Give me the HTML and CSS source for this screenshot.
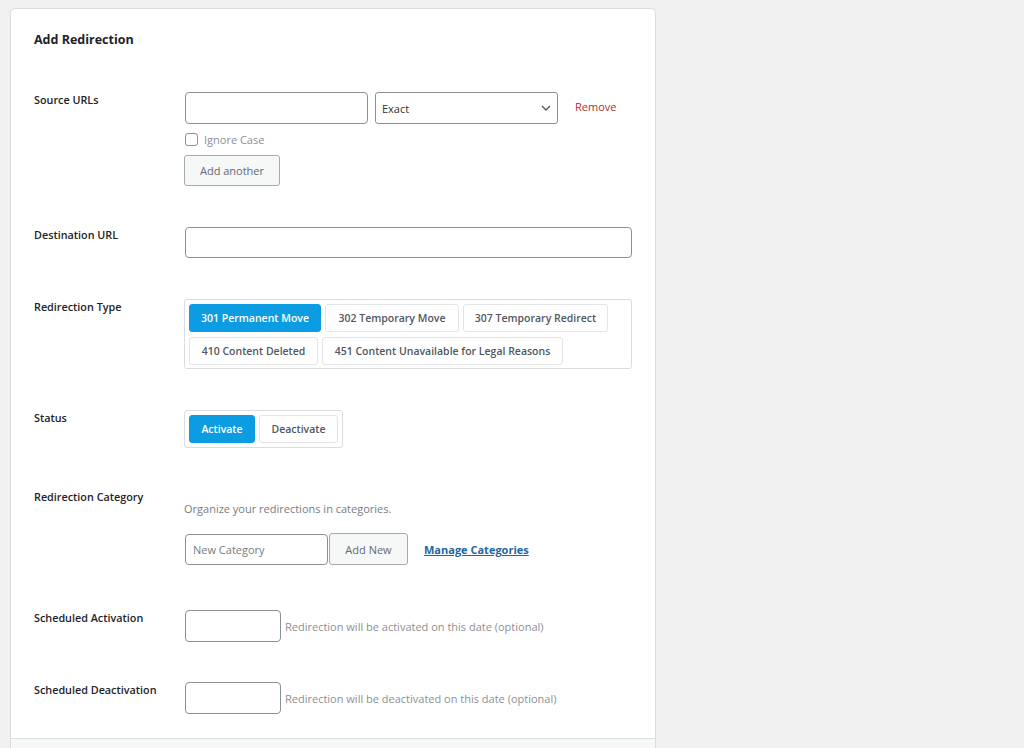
FILE: index.html
```html
<!DOCTYPE html>
<html>
<head>
<meta charset="utf-8">
<link rel="stylesheet" href="styles.css">
</head>
<body>
<div class="card">
  <div class="card-body">
    <h2 class="title">Add Redirection</h2>

    <div class="row row-source">
      <div class="label">Source URLs</div>
      <div class="field">
        <div class="source-line">
          <input class="input input-source" type="text">
          <div class="select">
            <span>Exact</span>
            <svg class="chev" width="10" height="6" viewBox="0 0 10 6"><path d="M1 1l4 4 4-4" fill="none" stroke="#50575e" stroke-width="1.3"/></svg>
          </div>
          <a class="remove">Remove</a>
        </div>
        <label class="check-line"><span class="checkbox"></span><span class="check-text">Ignore Case</span></label>
        <button class="btn btn-another">Add another</button>
      </div>
    </div>

    <div class="row">
      <div class="label">Destination URL</div>
      <div class="field">
        <input class="input input-dest" type="text">
      </div>
    </div>

    <div class="row">
      <div class="label">Redirection Type</div>
      <div class="field">
        <div class="group group-type">
          <span class="opt active w301">301 Permanent Move</span>
          <span class="opt w302">302 Temporary Move</span>
          <span class="opt w307">307 Temporary Redirect</span>
          <span class="opt w410">410 Content Deleted</span>
          <span class="opt w451">451 Content Unavailable for Legal Reasons</span>
        </div>
      </div>
    </div>

    <div class="row">
      <div class="label">Status</div>
      <div class="field">
        <div class="group group-status">
          <span class="opt active wact">Activate</span>
          <span class="opt wdeact">Deactivate</span>
        </div>
      </div>
    </div>

    <div class="row row-cat">
      <div class="label">Redirection Category</div>
      <div class="field">
        <p class="desc">Organize your redirections in categories.</p>
        <div class="cat-line">
          <input class="input input-cat" type="text" placeholder="New Category">
          <button class="btn btn-add">Add New</button>
          <a class="manage">Manage Categories</a>
        </div>
      </div>
    </div>

    <div class="row row-sched">
      <div class="label">Scheduled Activation</div>
      <div class="field sched-line">
        <input class="input input-date" type="text">
        <span class="hint">Redirection will be activated on this date (optional)</span>
      </div>
    </div>

    <div class="row row-sched2">
      <div class="label">Scheduled Deactivation</div>
      <div class="field sched-line">
        <input class="input input-date" type="text">
        <span class="hint">Redirection will be deactivated on this date (optional)</span>
      </div>
    </div>
  </div>
  <div class="card-foot"></div>
</div>
</body>
</html>
```

FILE: styles.css
```css
html, body {
  margin: 0;
  padding: 0;
  background: #f0f0f1;
  font-family: "Open Sans", "Noto Sans", sans-serif;
  color: #3c434a;
  height: 748px;
  overflow: hidden;
}
.card {
  margin: 8px 0 0 10px;
  width: 644px;
  background: #fff;
  border: 1px solid #dcdcde;
  border-radius: 5px;
}
.card-body {
  padding: 22px 24px 24px 23px;
}
.title {
  margin: 0 0 43px 0;
  font-size: 12.5px;
  line-height: 18px;
  font-weight: 700;
  color: #1d2327;
}
.row {
  display: flex;
  margin-bottom: 41px;
}
.row-cat { margin-bottom: 45px; }
.row-sched { margin-bottom: 40px; }
.row-sched2 { margin-bottom: 0; }
.label {
  width: 151px;
  flex: none;
  padding-top: 1px;
  font-size: 10.8px;
  line-height: 14px;
  font-weight: 600;
  color: #1d2327;
}
.field { flex: 1; }
.input {
  display: block;
  box-sizing: border-box;
  border: 1px solid #8c8f94;
  border-radius: 4px;
  background: #fff;
  height: 32px;
  margin: 0;
  padding: 0 7px;
  font-family: inherit;
  font-size: 11px;
  color: #50575e;
  outline: none;
}
.input::placeholder { color: #787c82; }
.source-line {
  display: flex;
  align-items: center;
  height: 32px;
}
.input-source { width: 183px; }
.select {
  box-sizing: border-box;
  width: 183px;
  height: 32px;
  margin-left: 7px;
  border: 1px solid #8c8f94;
  border-radius: 3px;
  display: flex;
  align-items: center;
  justify-content: space-between;
  padding: 0 6px 0 6px;
  font-size: 11px;
  color: #2c3338;
}
.remove {
  margin-left: 17px;
  margin-top: -3px;
  font-size: 11px;
  color: #b32d2e;
}
.check-line {
  display: flex;
  align-items: center;
  margin-top: 9px;
  height: 13px;
}
.checkbox {
  box-sizing: border-box;
  width: 13px;
  height: 13px;
  border: 1px solid #8c8f94;
  border-radius: 3px;
}
.check-text {
  margin-left: 6px;
  font-size: 11px;
  color: #8c8f94;
}
.btn {
  display: block;
  box-sizing: border-box;
  height: 31px;
  padding: 0;
  margin: 0;
  background: #f6f7f7;
  border: 1px solid #a7aaad;
  border-radius: 3px;
  font-family: inherit;
  font-size: 11px;
  color: #646970;
  white-space: nowrap;
}
.btn-another {
  margin-top: 9px;
  width: 96px;
  margin-left: -1px;
}
.input-dest { width: 447px; height: 31px; }
.group {
  box-sizing: border-box;
  border: 1px solid #dcdcde;
  border-radius: 3px;
  padding: 4px 4px 3px 4px;
  display: flex;
  flex-wrap: wrap;
  gap: 5px 4px;
  margin-left: -1px;
}
.group-type { width: 448px; }
.group-status { width: 159px; padding-bottom: 4px; }
.opt {
  box-sizing: border-box;
  height: 28px;
  display: flex;
  align-items: center;
  justify-content: center;
  border: 1px solid #e2e4e7;
  border-radius: 3px;
  background: #fff;
  font-size: 10.5px;
  font-weight: 600;
  color: #50575e;
}
.opt.active {
  background: #0c9ce2;
  border-color: #0c9ce2;
  color: #fff;
}
.w301 { width: 132px; }
.w302 { width: 134px; }
.w307 { width: 145px; }
.w410 { width: 129px; }
.w451 { width: 241px; }
.wact { width: 66px; }
.wdeact { width: 79px; }
.desc {
  margin: 13px 0 0 -1px;
  font-size: 11px;
  line-height: 14px;
  color: #787c82;
}
.cat-line {
  display: flex;
  align-items: center;
  margin-top: 17px;
}
.input-cat { width: 143px; height: 31px; }
.btn-add {
  margin-left: 1px;
  width: 79px;
  height: 32px;
}
.manage {
  margin-left: 16px;
  font-size: 11px;
  font-weight: 700;
  color: #22669b;
  text-decoration: underline;
}
.sched-line {
  display: flex;
  align-items: center;
}
.input-date { width: 96px; }
.hint {
  margin-left: 4px;
  font-size: 11px;
  color: #8c8f94;
}
.card-foot {
  border-top: 1px solid #dcdcde;
  background: #f6f7f7;
  height: 40px;
}
```
